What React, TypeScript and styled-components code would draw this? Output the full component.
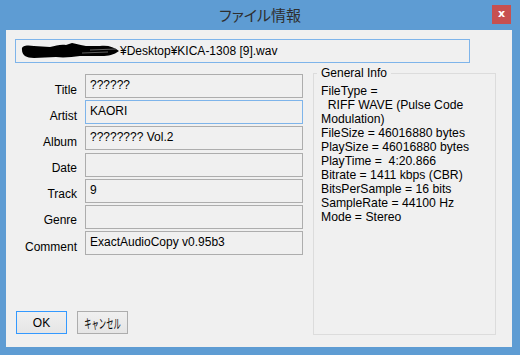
import { Fragment } from "react";
import styled, { createGlobalStyle } from "styled-components";

const GlobalStyle = createGlobalStyle`
  html, body {
    margin: 0;
    padding: 0;
  }
  body {
    font-family: "Liberation Sans", Arial, sans-serif;
    font-size: 12px;
    color: #000;
  }
`;

const Frame = styled.div`
  width: 520px;
  height: 355px;
  background: #5e9cd3;
  display: flex;
  flex-direction: column;
  box-sizing: border-box;
`;

const TitleBar = styled.div`
  height: 30px;
  display: grid;
  grid-template-columns: 1fr auto 1fr;
  align-items: start;
  padding-right: 9px;
  padding-left: 9px;
`;

const Caption = styled.div`
  grid-column: 2;
  padding-top: 5px;
  font-family: "Noto Sans CJK JP", sans-serif;
  font-size: 15px;
  line-height: 20px;
  font-feature-settings: "palt";
  color: #2e2e2e;
`;

const CloseButton = styled.div`
  grid-column: 3;
  justify-self: end;
  margin-top: 5px;
  width: 19px;
  height: 19px;
  background: #c75050;
  color: #fff;
  font-family: "DejaVu Sans", sans-serif;
  font-weight: bold;
  font-size: 11px;
  line-height: 17px;
  text-align: center;
`;

const Client = styled.div`
  flex: 1;
  margin: 0 8px 8px 6px;
  background: #f0f0f0;
  display: flex;
  flex-direction: column;
  padding: 9px 16px 12px 9px;
`;

const PathBox = styled.div`
  width: 455px;
  height: 24px;
  box-sizing: border-box;
  border: 1px solid #7eb4ea;
  padding: 1px 4px;
  display: flex;
  align-items: center;
  line-height: 14px;
  white-space: nowrap;
`;

const Blot = styled.svg`
  flex: none;
  margin-right: 1px;
`;

const MainRow = styled.div`
  flex: 1;
  display: flex;
  margin-top: 3px;
  margin-left: -9px;
`;

const LeftColumn = styled.div`
  width: 297px;
  display: flex;
  flex-direction: column;
`;

const FieldGrid = styled.div`
  display: grid;
  grid-template-columns: 71px 218px;
  column-gap: 8px;
  row-gap: 2.2px;
  padding-top: 8px;
`;

const Label = styled.div`
  text-align: right;
  padding-top: 8.5px;
  line-height: 14px;
`;

const Field = styled.div<{ $active?: boolean }>`
  height: 24px;
  box-sizing: border-box;
  border: 1px solid ${(p) => (p.$active ? "#7eb4ea" : "#adadad")};
  padding: 3px 4px;
  line-height: 14px;
  white-space: nowrap;
`;

const ButtonRow = styled.div`
  margin-top: auto;
  display: flex;
  gap: 10px;
  padding-left: 10px;
  padding-bottom: 1px;
`;

const Button = styled.div<{ $default?: boolean }>`
  width: 51px;
  height: 23px;
  box-sizing: border-box;
  border: 1px solid ${(p) => (p.$default ? "#3399ff" : "#adadad")};
  background: linear-gradient(#f0f0f0, #e5e5e5);
  display: flex;
  align-items: center;
  justify-content: center;
  font-size: 12px;
  white-space: nowrap;
  overflow: hidden;
`;

const KanaText = styled.span`
  display: inline-block;
  flex: none;
  font-family: "Noto Sans CJK JP", sans-serif;
  font-size: 13px;
  line-height: 15px;
  transform: scaleX(0.56);
`;

const GroupBox = styled.fieldset`
  margin: 0 0 0 10px;
  width: 183px;
  box-sizing: border-box;
  border: 1px solid #dcdcdc;
  padding: 4px 3px 0 3px;
  min-width: 0;
`;

const Legend = styled.legend`
  padding: 0 4px;
  line-height: 14px;
`;

const InfoLine = styled.div`
  padding-left: 4px;
  line-height: 14px;
  font-size: 12.2px;
  white-space: pre;
`;

const fields = [
  { label: "Title", value: "??????" },
  { label: "Artist", value: "KAORI", active: true },
  { label: "Album", value: "???????? Vol.2" },
  { label: "Date", value: "" },
  { label: "Track", value: "9" },
  { label: "Genre", value: "" },
  { label: "Comment", value: "ExactAudioCopy v0.95b3" },
];

const info = [
  "FileType =",
  "  RIFF WAVE (Pulse Code",
  "Modulation)",
  "FileSize = 46016880 bytes",
  "PlaySize = 46016880 bytes",
  "PlayTime =  4:20.866",
  "Bitrate = 1411 kbps (CBR)",
  "BitsPerSample = 16 bits",
  "SampleRate = 44100 Hz",
  "Mode = Stereo",
];

export default function App() {
  return (
    <>
      <GlobalStyle />
      <Frame>
        <TitleBar>
          <Caption>ファイル情報</Caption>
          <CloseButton>x</CloseButton>
        </TitleBar>
        <Client>
          <PathBox>
            <Blot width="99" height="16" viewBox="0 0 99 16">
              <path
                d="M2,7 C1,2 8,2 14,3 L30,4 C36,3 40,1 46,2 L52,0 C57,1 60,2 66,3 L80,3 C88,2 94,4 99,8 C94,12 88,13 82,13 L60,13 C52,14 44,15 36,14 L14,15 C6,15 2,12 2,7 Z"
                fill="#000"
              />
              <path d="M70,7 L96,6 M62,10 L88,9" stroke="#777" strokeWidth="0.8" />
            </Blot>
            ¥Desktop¥KICA-1308 [9].wav
          </PathBox>
          <MainRow>
            <LeftColumn>
              <FieldGrid>
                {fields.map((f) => (
                  <Fragment key={f.label}>
                    <Label>{f.label}</Label>
                    <Field $active={f.active}>{f.value}</Field>
                  </Fragment>
                ))}
              </FieldGrid>
              <ButtonRow>
                <Button $default>OK</Button>
                <Button>
                  <KanaText>キャンセル</KanaText>
                </Button>
              </ButtonRow>
            </LeftColumn>
            <GroupBox>
              <Legend>General Info</Legend>
              {info.map((line, i) => (
                <InfoLine key={i}>{line}</InfoLine>
              ))}
            </GroupBox>
          </MainRow>
        </Client>
      </Frame>
    </>
  );
}
